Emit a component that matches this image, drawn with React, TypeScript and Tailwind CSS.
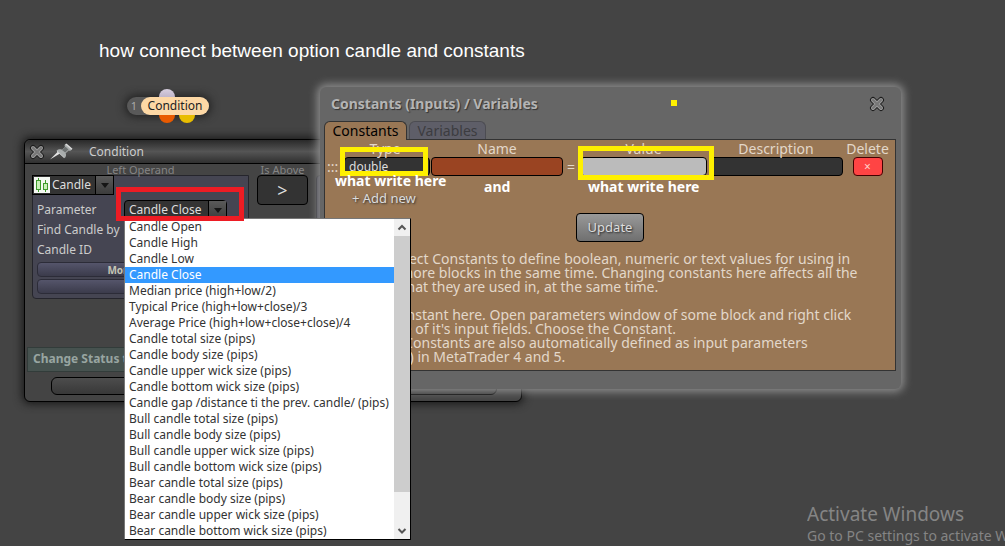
import type { ReactNode } from 'react'
import clsx from 'clsx'

const PRICE_OPTIONS = [
  'Candle Open',
  'Candle High',
  'Candle Low',
  'Candle Close',
  'Median price (high+low/2)',
  'Typical Price (high+low+close)/3',
  'Average Price (high+low+close+close)/4',
  'Candle total size (pips)',
  'Candle body size (pips)',
  'Candle upper wick size (pips)',
  'Candle bottom wick size (pips)',
  'Candle gap /distance ti the prev. candle/ (pips)',
  'Bull candle total size (pips)',
  'Bull candle body size (pips)',
  'Bull candle upper wick size (pips)',
  'Bull candle bottom wick size (pips)',
  'Bear candle total size (pips)',
  'Bear candle body size (pips)',
  'Bear candle upper wick size (pips)',
  'Bear candle bottom wick size (pips)',
]

const HELP_CONNECT = [
  'You may select Constants to define boolean, numeric or text values for using in',
  'for one or more blocks in the same time. Changing constants here affects all the',
  'the blocks that they are used in, at the same time.',
]

const HELP_USAGE = [
  'Define a Constant here. Open parameters window of some block and right click',
  'on each one of it\'s input fields. Choose the Constant.',
  'The added Constants are also automatically defined as input parameters',
  '(with extern) in MetaTrader 4 and 5.',
]

function CrossIcon() {
  return (
    <svg viewBox="0 0 16 16" className="w-4 h-4" fill="none" strokeLinecap="round">
      <path d="M4 4l8 8M12 4l-8 8" stroke="#1c1c1c" strokeWidth="6" />
      <path d="M4 4l8 8M12 4l-8 8" stroke="#9a9a9a" strokeWidth="4" />
      <path d="M4 4l8 8M12 4l-8 8" stroke="#777" strokeWidth="2" />
    </svg>
  )
}

function PinIcon() {
  return (
    <svg viewBox="0 0 24 18" className="w-6 h-[18px]">
      <path d="M1 16.500L9 8.500l2 2z" fill="#e4e4e4" />
      <path d="M7.500 7.500c2-1.500 4-1.500 5.500-.8l3-2.700c-.8-1.500-.4-2.700.8-3.200l6 5.400c-.6 1.400-1.800 1.800-3.200 1.200l-2.900 2.800c.6 1.800.5 3.500-1 5z" fill="#a9adad" />
      <path d="M13 7l3.500-3.200 3 2.700-3.300 3z" fill="#6d7171" />
      <path d="M17 1l6 5.200" stroke="#ddd" strokeWidth="1.500" />
      <path d="M8 8l7 6.500" stroke="#c9cccc" strokeWidth="1" />
    </svg>
  )
}

function CandlesIcon() {
  return (
    <svg viewBox="0 0 16 16" className="w-4 h-4 shrink-0 bg-[#f4f8f2]" fill="#c9f0b8" stroke="#3f9a2c">
      <path d="M4.500 1v14M11.500 3v12" />
      <rect x="2.500" y="3.500" width="4" height="9" />
      <rect x="9.500" y="6.500" width="4" height="6" />
    </svg>
  )
}

interface PickerProps {
  id: string
  label?: string
  value: string
  className?: string
  icon?: ReactNode
}

function Picker({ id, label, value, className, icon }: PickerProps) {
  return (
    <div className={clsx('flex items-center h-5 border border-black bg-[#333] text-xs text-[#ddd]', className)}>
      {icon}
      <select id={id} aria-label={label} className="appearance-none flex-1 min-w-0 h-full pl-0.5 leading-4 bg-transparent outline-none">
        <option>{value}</option>
      </select>
      <span className="flex items-center justify-center w-[18px] h-full border-l border-black bg-linear-to-b from-[#5a5a5a] to-[#3c3c3c] pointer-events-none">
        <svg viewBox="0 0 8 5" className="w-2 h-[5px]"><path d="M0 0h8L4 5z" fill="#151515" /></svg>
      </span>
    </div>
  )
}

function ConditionNode() {
  return (
    <div className="absolute left-[127px] top-[97px] flex h-[18px] w-[82px] items-center rounded-full bg-[#595959] shadow-[0_0_8px_2px_#222] text-xs">
      <span className="absolute left-8 -top-2 w-4 h-4 rounded-full bg-linear-to-b from-[#d8cfe0] to-[#a89db5]" />
      <span className="absolute left-8 top-[10px] w-4 h-4 rounded-full bg-[#e85a00]" />
      <span className="absolute left-[52px] top-[10px] w-4 h-4 rounded-full bg-[#e8bd00]" />
      <span className="w-[14px] text-center text-[11px] text-[#aaa]">1</span>
      <span className="relative flex-1 h-full rounded-full bg-[#fdd8a5] text-center leading-[18px] text-[#222]">Condition</span>
    </div>
  )
}

function ConditionWindow() {
  const bar = 'h-[15px] rounded-sm border border-[#2c2c38] bg-linear-to-b from-[#55556b] to-[#3b3b4b] text-[10px] leading-3 font-bold text-[#c5c5b5]'
  return (
    <section className="absolute left-6 top-[139px] w-[498px] rounded-md border border-black bg-[#444] shadow-[0_0_8px_2px_#1a1a1a] pb-1.5">
      <header className="flex items-center gap-1 h-6 pl-1 rounded-t-md border-b border-black bg-linear-to-b from-[#2a2a2a] via-[#555] to-[#303030] text-xs text-[#ccc]">
        <button aria-label="Close condition"><CrossIcon /></button>
        <button aria-label="Pin condition"><PinIcon /></button>
        <h2 className="ml-3">Condition</h2>
      </header>
      <div className="flex items-start gap-2 h-[183px] pl-[7px] pt-px text-[11px] leading-[10px] text-[#858585]">
        <div className="w-[217px]">
          <p className="text-center">Left Operand</p>
          <div className="h-[124px] rounded-b-sm border border-[#25252c] bg-[#454552]">
            <Picker id="operand" label="Left operand" value="Candle" className="w-[82px] -mt-px -ml-px pl-px" icon={<CandlesIcon />} />
            <div className="flex flex-col px-1 pt-[3px] text-xs leading-5 text-[#ccc]">
              <div className="flex items-end justify-between h-[22px]">
                <label htmlFor="parameter">Parameter</label>
                <Picker id="parameter" value="Candle Close" className="w-[103px] mr-[17px] pl-0.5 rounded-sm" />
              </div>
              <p>Find Candle by</p>
              <p>Candle ID</p>
              <div className="flex flex-col gap-0.5 pt-0.5">
                <button className={bar}>More options</button>
                <button className={bar}>Adjust</button>
              </div>
            </div>
          </div>
        </div>
        <div className="w-[51px]">
          <p className="text-center whitespace-nowrap">Is Above</p>
          <button className="w-full h-[30px] rounded-sm border border-black bg-[#333] text-lg leading-6 text-[#ddd]">&gt;</button>
        </div>
        <div className="w-[170px] pt-[10px]">
          <div className="h-[124px] rounded-sm border border-[#25252c] bg-[#454552]" />
        </div>
      </div>
      <p className="mx-0.5 pl-[5px] h-[25px] border border-[#323c3a] bg-[#46524f] text-xs leading-[22px] font-bold text-[#98a5a1]">Change Status to</p>
      <div className="pt-[5px] pl-[26px] pr-6">
        <button aria-label="Apply condition" className="block w-full h-[18px] rounded-md border border-black bg-linear-to-b from-[#4d4d4d] to-[#383838]" />
      </div>
    </section>
  )
}

function ConstantsTable() {
  const box = 'block w-full h-[19px] rounded-sm border border-black px-1 text-xs leading-4 outline-none'
  return (
    <table className="table-fixed w-full text-sm leading-4 text-[#e3d8ca]">
      <colgroup>
        <col className="w-[18px]" />
        <col className="w-[88px]" />
        <col className="w-[132px]" />
        <col className="w-4" />
        <col className="w-[129px]" />
        <col className="w-[136px]" />
        <col />
      </colgroup>
      <thead>
        <tr className="h-[17px] *:p-0 *:font-normal">
          <th />
          <th><div className="pr-1">Type</div></th>
          <th>Name</th>
          <th />
          <th>Value</th>
          <th>Description</th>
          <th><div className="pr-1">Delete</div></th>
        </tr>
      </thead>
      <tbody>
        <tr className="*:p-0">
          <td><div className="pl-0.5">:::</div></td>
          <td>
            <div className="px-px">
              <select aria-label="Type" className={clsx(box, 'appearance-none bg-[#333] text-[#ddd]')}><option>double</option></select>
            </div>
          </td>
          <td><input aria-label="Name" className={clsx(box, 'bg-[#9a4422]')} /></td>
          <td className="text-center">=</td>
          <td><div className="px-px"><input aria-label="Value" className={clsx(box, 'bg-[#bbb]')} /></div></td>
          <td><div className="pl-0.5 pr-px"><input aria-label="Description" className={clsx(box, 'bg-[#333]')} /></div></td>
          <td>
            <div className="flex justify-center pr-1">
              <button aria-label="Delete constant" className="w-[30px] h-[19px] rounded-sm border border-[#400] bg-[#ff4444] text-xs leading-4 text-[#ffd0c8]">×</button>
            </div>
          </td>
        </tr>
      </tbody>
    </table>
  )
}

function ConstantsDialog() {
  return (
    <section className="absolute left-80 top-[87px] w-[581px] rounded-md bg-[#666] shadow-[0_0_8px_3px_#8c8c8c] pl-1 pr-[5px] pb-[18px]">
      <header className="flex items-center justify-between h-[34px] pl-[7px] pr-[11px]">
        <h2 className="text-sm font-bold text-[#b4b4b4] [text-shadow:1px_1px_1px_#333]">Constants (Inputs) / Variables</h2>
        <button aria-label="Close constants"><CrossIcon /></button>
      </header>
      <div role="tablist" className="flex gap-0.5 h-[18px] text-sm leading-[18px]">
        <button role="tab" aria-selected="true" className="relative h-[19px] w-[83px] rounded-t-md border border-b-0 border-[#333] bg-[#997755] text-black">Constants</button>
        <button role="tab" aria-selected="false" className="w-[77px] rounded-t-md border border-b-0 border-[#4c4c52] bg-[#5e5e68] text-[#3c3c40]">Variables</button>
      </div>
      <div className="border border-[#333] bg-[#997755] text-sm text-[#e3d8ca]">
        <ConstantsTable />
        <button className="block ml-[27px] mt-3 h-5 text-[13px] leading-5 text-[#ddd] [text-shadow:1px_1px_2px_#333]">+ Add new</button>
        <button className="block mx-auto mt-[5px] w-[68px] h-[29px] rounded-sm border border-black bg-linear-to-b from-[#999] to-[#707070] text-[13px] text-[#ddd] [text-shadow:1px_1px_2px_#222]">Update</button>
        <div className="flex flex-col gap-3.5 pt-2.5 pb-1.5 pl-1.5 leading-[14px] whitespace-nowrap">
          <div>{HELP_CONNECT.map(line => <p key={line}>{line}</p>)}</div>
          <div>{HELP_USAGE.map(line => <p key={line}>{line}</p>)}</div>
        </div>
      </div>
    </section>
  )
}

function PriceList() {
  return (
    <div className="absolute left-[124px] top-[218px] flex w-[287px] border border-[#777] border-r-black border-b-black bg-white text-xs leading-4 text-[#333]">
      <ul role="listbox" aria-label="Parameter options" className="flex-1 min-w-0">
        {PRICE_OPTIONS.map(option => (
          <li
            key={option}
            role="option"
            aria-selected={option === 'Candle Close'}
            className={clsx('h-4 pl-1 whitespace-nowrap', option === 'Candle Close' && 'bg-[#3399ff] text-white')}
          >
            {option}
          </li>
        ))}
      </ul>
      <div className="flex flex-col items-center shrink-0 w-4 bg-[#f0f0f0]">
        <svg viewBox="0 0 16 17" className="w-4 h-[17px]" fill="none" stroke="#555" strokeWidth="2"><path d="M4.500 10.500L8 7l3.500 3.500" /></svg>
        <span className="w-full h-64 bg-[#cdcdcd]" />
        <svg viewBox="0 0 16 17" className="w-4 h-[17px] mt-auto" fill="none" stroke="#555" strokeWidth="2"><path d="M4.500 7L8 10.500 11.500 7" /></svg>
      </div>
    </div>
  )
}

function Annotations() {
  return (
    <div className="text-sm leading-4 font-bold text-white whitespace-nowrap">
      <span className="absolute left-[116px] top-[187px] w-32 h-[34px] border-5 border-[#ed1c24]" />
      <span className="absolute left-[340px] top-[147px] w-[88px] h-[29px] border-5 border-[#fff000]" />
      <span className="absolute left-[578px] top-[146px] w-[136px] h-[34px] border-5 border-[#fff000]" />
      <span className="absolute left-[671px] top-[100px] w-1.5 h-1.5 bg-[#fff000]" />
      <p className="absolute left-[335px] top-[173px]">what write here</p>
      <p className="absolute left-[484px] top-[179px]">and</p>
      <p className="absolute left-[588px] top-[179px]">what write here</p>
    </div>
  )
}

export default function App() {
  return (
    <main className="relative min-h-screen overflow-hidden bg-[#444] font-['Noto_Sans',sans-serif]">
      <h1 className="pl-[99px] pt-[41px] font-['Liberation_Sans',sans-serif] text-[19px] leading-5 text-white">
        how connect between option candle and constants
      </h1>
      <ConditionNode />
      <ConditionWindow />
      <ConstantsDialog />
      <PriceList />
      <Annotations />
      <div className="absolute right-0 bottom-0 w-[198px] overflow-hidden whitespace-nowrap text-[#858585]">
        <p className="text-[19px] leading-6">Activate Windows</p>
        <p className="text-sm leading-5">Go to PC settings to activate Windows.</p>
      </div>
    </main>
  )
}
